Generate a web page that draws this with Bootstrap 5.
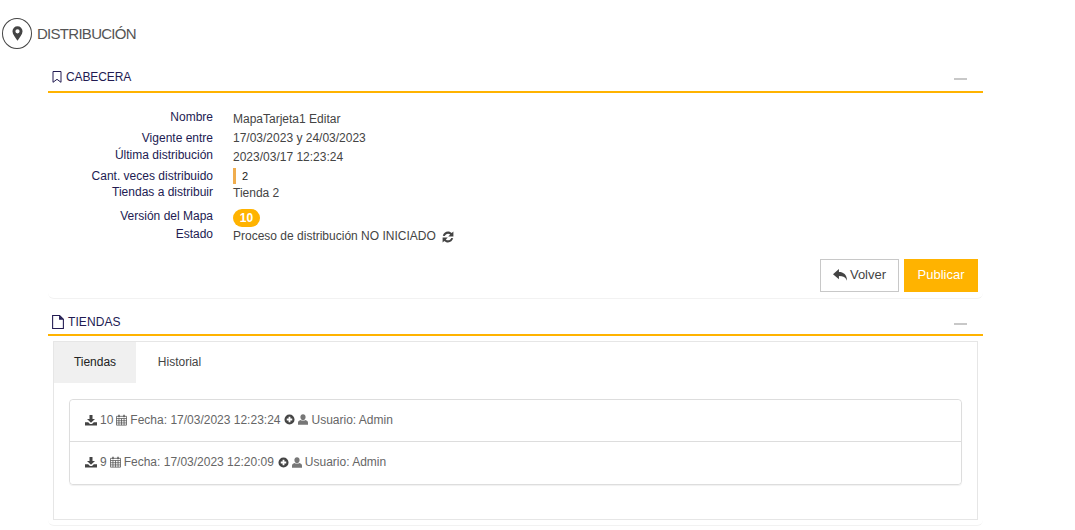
<!DOCTYPE html>
<html lang="es">
<head>
    <meta charset="UTF-8">
    <meta name="viewport" content="width=device-width, initial-scale=1.0">
    <title>Distribución</title>
    <link href="https://cdn.jsdelivr.net/npm/bootstrap@5.3.0/dist/css/bootstrap.min.css" rel="stylesheet">
    <style>
        body {
            font-family: "Liberation Sans", Arial, sans-serif;
            font-size: 12px;
            color: #444;
            background: #fff;
            height: 530px;
            overflow: hidden;
        }
        svg { fill: currentColor; flex: none; }
        .page-head { height: 31px; margin: 18px 0 0 2px; gap: 5px; }
        .pin-circle {
            width: 30px;
            height: 31px;
            border: 1px solid #444;
            border-radius: 50%;
            color: #444;
        }
        .page-name { font-size: 15px; color: #555; letter-spacing: -.72px; padding-top: 2px; }
        .sheet { width: 935px; margin-left: 48px; }
        .sheet-one { margin-top: 14px; height: 236px; }
        .sheet-two { height: 227px; }
        .sheet-bottom { border-bottom: 1px solid #f2f2f2; border-radius: 0 0 6px 6px; }
        .sheet-head {
            height: 30px;
            border-bottom: 2px solid #ffb300;
            color: #221b52;
            padding: 0 16px 0 4px;
            gap: 4px;
        }
        .sheet-two .sheet-head { height: 37px; padding-top: 11px; }
        .sheet-title { font-size: 12px; letter-spacing: -.1px; }
        .sheet-two .sheet-title { letter-spacing: .1px; }
        .fold-mark { width: 13px; height: 2px; background: #c8c8c8; margin-top: 3px; }
        .info-box { padding-top: 16px; }
        .info-line { height: 19px; }
        .line-21 { height: 21px; }
        .line-17 { height: 17px; }
        .line-16 { height: 16px; }
        .line-18 { height: 18px; }
        .line-24 { height: 24px; }
        .info-key {
            width: 165px;
            text-align: right;
            color: #221b52;
            line-height: 17px;
            margin-right: 20px;
        }
        .info-val { line-height: 17px; color: #444; }
        .drop-1 { padding-top: 1px; }
        .drop-2 { padding-top: 2px; }
        .count-mark {
            display: inline-block;
            width: 3px;
            height: 16px;
            background: #f0ad4e;
            margin-right: 6px;
        }
        .count-num { font-size: 11px; color: #222; }
        .version-pill {
            background: #ffb300;
            color: #fff;
            font-weight: 700;
            border-radius: 9px;
            width: 27px;
            height: 18px;
            line-height: 18px;
            text-align: center;
        }
        .sync-icon { margin-left: 2px; color: #444; }
        .action-row { margin-top: 14px; padding-right: 5px; gap: 5px; }
        .btn-back, .btn-publish {
            height: 33px;
            border-radius: 0;
            font-size: 13px;
            padding: 0 0 1px;
            display: flex;
            align-items: center;
            justify-content: center;
        }
        .btn-back { width: 79px; border: 1px solid #c8c8c8; color: #444; background: #fff; gap: 3px; }
        .btn-publish { width: 74px; background: #ffb300; border: 0; color: #fff; font-weight: 400; }
        .tab-box {
            margin: 5px 5px 0;
            height: 179px;
            border: 1px solid #e6e6e6;
        }
        .tab-link {
            display: block;
            height: 41px;
            line-height: 41px;
            padding: 0;
            width: 82px;
            text-align: center;
            color: #333;
            text-decoration: none;
            border: 0;
        }
        .tab-link.active { background: #f0f0f0; color: #222; }
        .tab-link.second { width: 87px; color: #444; }
        .store-list {
            margin: 16px 15px 0;
            border: 1px solid #ddd;
            border-radius: 4px;
            box-shadow: 0 1px 1px rgba(0,0,0,.06);
            --bs-list-group-bg: #fff;
        }
        .store-item {
            height: 42px;
            padding: 0 15px 2px;
            gap: 3px;
            color: #666;
            border: 0;
            border-bottom: 1px solid #ddd;
        }
        .store-item:last-child { border-bottom: 0; height: 42px; }
        .mini-dark { color: #444; }
        .mini-cal { color: #555; }
        .mini-plus { color: #444; margin-left: 1px; }
        .mini-grey { color: #777; }
    </style>
</head>
<body>
<svg width="0" height="0" class="d-block position-absolute">
    <defs>
        <symbol id="ic-down" viewBox="0 0 12 12"><path d="M4.500 1h3v4h2.500L6 8.800 2 5h2.500z"/><path d="M0 8.200h3.200L5 10h2l1.800-1.800H12V11.500H0z"/></symbol>
        <symbol id="ic-cal" viewBox="0 0 12 12"><path fill="none" stroke="currentColor" stroke-width=".85" d="M.5 2h11v9.600H.5zM.5 4.400h11M.5 6.800h11M.5 9.200h11M3.200 4.400v7.200M6 4.400v7.200M8.800 4.400v7.200"/><path d="M2.500.2h1.500V3H2.500zM8 .2h1.500V3H8z"/></symbol>
        <symbol id="ic-plus" viewBox="0 0 12 12"><path fill-rule="evenodd" d="M6 .5a5.500 5.500 0 1 1 0 11 5.500 5.500 0 0 1 0-11zM5 3v2H3v2h2v2h2V7h2V5H7V3z"/></symbol>
        <symbol id="ic-user" viewBox="1 .5 10 11"><path d="M6 .8c1.600 0 2.600 1.200 2.600 2.800S7.600 7 6 7 3.400 5.200 3.400 3.600 4.400.8 6 .8z"/><path d="M3.600 6.500C4.300 7.400 7.700 7.400 8.400 6.500 10 7 11 7.800 11 9.200V11.300H1V9.200C1 7.800 2 7 3.600 6.500z"/></symbol>
    </defs>
</svg>

<div class="page-head d-flex align-items-center">
    <span class="pin-circle d-flex align-items-center justify-content-center">
        <svg width="11" height="15" viewBox="0 0 12 16"><path fill-rule="evenodd" d="M6 0a5.500 5.500 0 0 1 5.500 5.500C11.500 9 8 12.500 6 16 4 12.500.5 9 .5 5.500A5.500 5.500 0 0 1 6 0zm0 3.300a2.300 2.300 0 1 0 0 4.600 2.300 2.300 0 0 0 0-4.600z"/></svg>
    </span>
    <span class="page-name">DISTRIBUCIÓN</span>
</div>

<section class="sheet sheet-one sheet-bottom">
    <div class="sheet-head d-flex align-items-center">
        <svg width="10" height="12" viewBox="0 0 10 12"><path d="M1 .5h8v10.800L5 8.300 1 11.300z" fill="none" stroke="currentColor"/></svg>
        <span class="sheet-title">CABECERA</span>
        <span class="fold-mark ms-auto"></span>
    </div>
    <div class="info-box">
        <div class="info-line line-21 d-flex"><div class="info-key">Nombre</div><div class="info-val drop-2">MapaTarjeta1 Editar</div></div>
        <div class="info-line line-17 d-flex"><div class="info-key">Vigente entre</div><div class="info-val">17/03/2023 y 24/03/2023</div></div>
        <div class="info-line line-21 d-flex"><div class="info-key">Última distribución</div><div class="info-val drop-2">2023/03/17 12:23:24</div></div>
        <div class="info-line line-16 d-flex"><div class="info-key">Cant. veces distribuido</div><div class="info-val d-flex align-items-center"><span class="count-mark"></span><span class="count-num">2</span></div></div>
        <div class="info-line line-24 d-flex"><div class="info-key">Tiendas a distribuir</div><div class="info-val drop-1">Tienda 2</div></div>
        <div class="info-line line-18 d-flex"><div class="info-key">Versión del Mapa</div><div class="info-val drop-1"><div class="version-pill">10</div></div></div>
        <div class="info-line d-flex"><div class="info-key">Estado</div><div class="info-val drop-2 d-flex align-items-center gap-1">Proceso de distribución NO INICIADO
            <svg class="sync-icon" width="12" height="12" viewBox="0 0 12 12"><path d="M6 .6c1.500 0 2.800.6 3.700 1.500L11.400.4V5.600H6.200L8.200 3.600C7.600 3 6.900 2.700 6 2.700 4.500 2.700 3.200 3.700 2.800 5.100L.8 4.700C1.400 2.400 3.500.6 6 .6zM.6 6.400H5.800L3.800 8.400c.6.6 1.300.9 2.200.9 1.500 0 2.800-1 3.200-2.400l2 .4C10.600 9.600 8.500 11.400 6 11.400c-1.500 0-2.800-.6-3.700-1.500L.6 11.600z"/></svg>
        </div></div>
    </div>
    <div class="action-row d-flex justify-content-end">
        <button type="button" class="btn btn-back">
            <svg width="14" height="12" viewBox="0 0 13 11"><path d="M5.500 0v2.800c4.200 0 7.500 2.400 7.500 8-1.200-3-3.500-4.300-7.500-4.300V9.500L0 4.700z"/></svg>
            Volver
        </button>
        <button type="button" class="btn btn-publish">Publicar</button>
    </div>
</section>

<section class="sheet sheet-two sheet-bottom">
    <div class="sheet-head d-flex align-items-center">
        <svg width="12" height="14" viewBox="0 0 11 13"><path d="M.5.500h6.500l3.500 3.500v8.500H.5z" fill="none" stroke="currentColor"/><path d="M6.500.500v4h4z"/></svg>
        <span class="sheet-title">TIENDAS</span>
        <span class="fold-mark ms-auto"></span>
    </div>
    <div class="tab-box">
        <ul class="nav" role="tablist">
            <li class="nav-item"><a class="tab-link active" href="#">Tiendas</a></li>
            <li class="nav-item"><a class="tab-link second" href="#">Historial</a></li>
        </ul>
        <div class="list-group store-list">
            <div class="list-group-item store-item d-flex align-items-center">
                <svg class="mini-dark" width="12" height="12"><use href="#ic-down"/></svg> 10
                <svg class="mini-cal" width="11" height="12"><use href="#ic-cal"/></svg> Fecha: 17/03/2023 12:23:24
                <svg class="mini-plus" width="11" height="11"><use href="#ic-plus"/></svg>
                <svg class="mini-grey" width="10" height="11"><use href="#ic-user"/></svg> Usuario: Admin
            </div>
            <div class="list-group-item store-item d-flex align-items-center">
                <svg class="mini-dark" width="12" height="12"><use href="#ic-down"/></svg> 9
                <svg class="mini-cal" width="11" height="12"><use href="#ic-cal"/></svg> Fecha: 17/03/2023 12:20:09
                <svg class="mini-plus" width="11" height="11"><use href="#ic-plus"/></svg>
                <svg class="mini-grey" width="10" height="11"><use href="#ic-user"/></svg> Usuario: Admin
            </div>
        </div>
    </div>
</section>
<script src="https://cdn.jsdelivr.net/npm/bootstrap@5.3.0/dist/js/bootstrap.bundle.min.js"></script>
</body>
</html>
